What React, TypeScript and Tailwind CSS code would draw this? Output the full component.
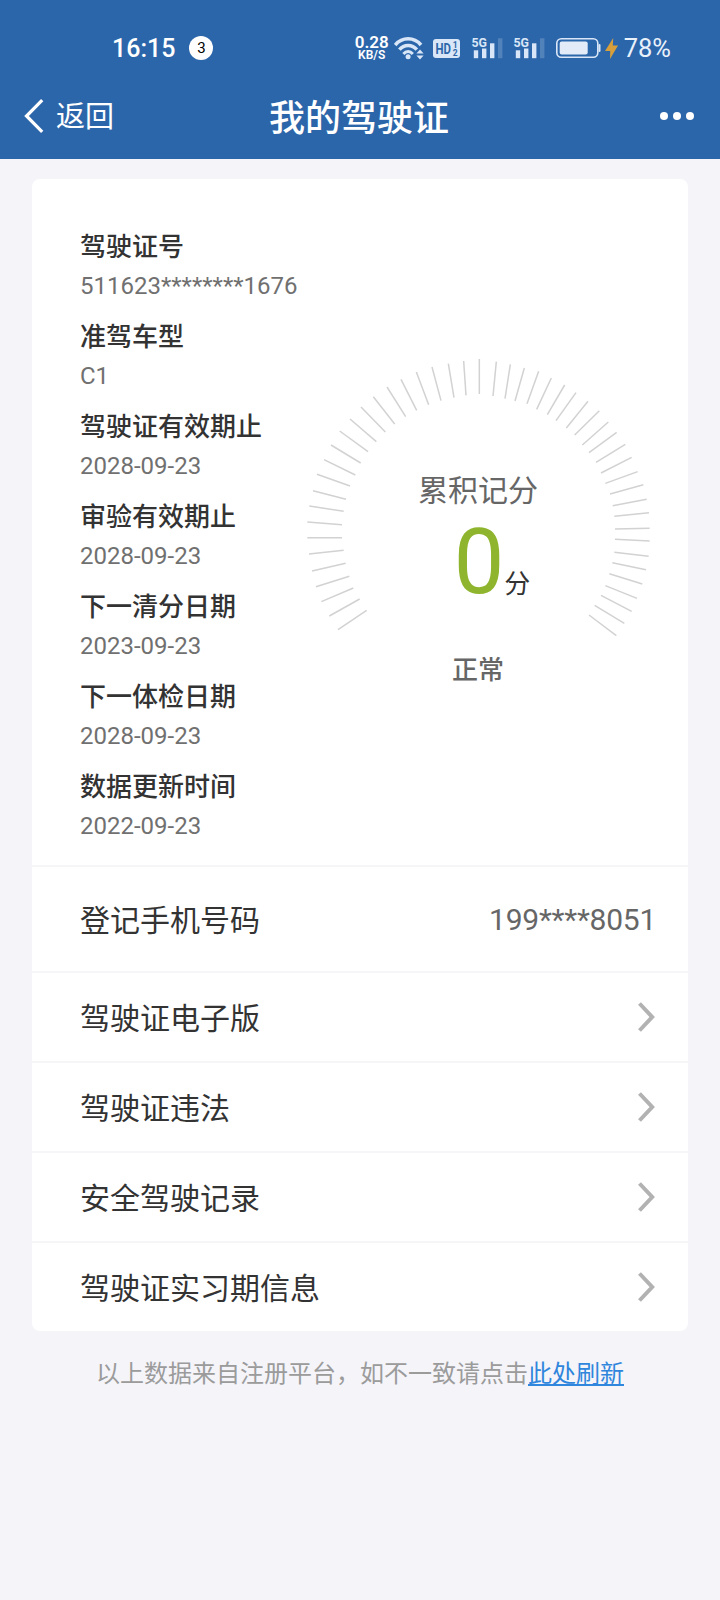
import type { ReactNode } from 'react';

interface Field {
    label: string;
    value: string;
}

const fields: Field[] = [
    { label: '驾驶证号', value: '511623********1676' },
    { label: '准驾车型', value: 'C1' },
    { label: '驾驶证有效期止', value: '2028-09-23' },
    { label: '审验有效期止', value: '2028-09-23' },
    { label: '下一清分日期', value: '2023-09-23' },
    { label: '下一体检日期', value: '2028-09-23' },
    { label: '数据更新时间', value: '2022-09-23' },
];

const links = ['驾驶证电子版', '驾驶证违法', '安全驾驶记录', '驾驶证实习期信息'];

// outer x, outer y, inner x, inner y (in thirds of a pixel), clockwise from the lower left
const ticks = [
    [144, 869, 230, 811], [118, 828, 209, 777], [94, 785, 190, 744], [78, 740, 178, 709], [66, 693, 167, 670],
    [57, 642, 161, 631], [52, 593, 156, 593], [52, 546, 156, 554], [58, 498, 161, 514], [69, 452, 168, 478],
    [81, 403, 180, 438], [102, 359, 196, 405], [123, 315, 212, 369], [149, 273, 234, 335], [180, 237, 259, 305],
    [213, 201, 286, 276], [250, 170, 314, 252], [291, 141, 347, 230], [333, 118, 380, 211], [379, 96, 416, 194],
    [426, 81, 453, 182], [475, 71, 492, 173], [521, 63, 528, 166], [568, 57, 568, 162], [619, 65, 609, 168],
    [661, 73, 645, 176], [703, 84, 675, 183], [746, 94, 711, 191], [784, 114, 740, 208], [824, 135, 772, 224],
    [858, 158, 798, 242], [894, 184, 829, 264], [928, 212, 854, 285], [955, 246, 877, 315], [980, 277, 897, 338],
    [1006, 313, 918, 367], [1025, 352, 933, 399], [1043, 395, 946, 430], [1060, 434, 960, 462], [1070, 478, 968, 497],
    [1077, 518, 973, 529], [1079, 565, 975, 567], [1079, 603, 975, 598], [1076, 649, 973, 637], [1068, 689, 967, 668],
    [1057, 732, 958, 701], [1041, 775, 946, 737], [1025, 814, 933, 766], [1003, 850, 914, 796], [979, 887, 897, 825],
];

function Signal() {
    return (
        <svg className="overflow-visible" width="32" height="22" viewBox="0 0 32 22" fill="#d9e6f7">
            <text x="-0.5" y="9.6" fontSize="13" fontWeight="700" textLength="15.5" lengthAdjust="spacingAndGlyphs">
                5G
            </text>
            <rect x="1.8" y="13.3" width="4.4" height="7.9" />
            <rect x="10" y="11.5" width="4.4" height="9.7" />
            <rect x="18" y="6.3" width="4.4" height="14.9" />
            <rect x="26" y="1.3" width="4.4" height="19.9" opacity="0.22" />
        </svg>
    );
}

function StatusBar() {
    return (
        <div className="flex h-[72px] items-center pt-6 pr-[49px] pl-[112px] text-[#e9f1fb]">
            <span className="text-[25px] leading-none font-medium text-white">16:15</span>
            <span className="ml-[14px] flex size-6 items-center justify-center rounded-full bg-white text-[15px] leading-none text-black">3</span>
            <div className="ml-auto flex items-center">
                <div className="flex w-[34px] flex-col items-center font-semibold text-white">
                    <span className="text-[17px] leading-[14px]">0.28</span>
                    <span className="text-[12px] leading-[13px]">KB/S</span>
                </div>
                <svg className="ml-[5px]" width="30" height="24" viewBox="0 0 30 24" fill="none" stroke="#d9e6f7" strokeWidth="3.5">
                    <path d="M1.2 9C8.2 0.8 20 0.8 27 9" />
                    <path d="M5.4 13.6C10 8 18.2 8 22.8 13.6" />
                    <path d="M9.4 18C12.2 14.8 16 14.8 18.8 18" strokeWidth="3" />
                    <circle cx="14.1" cy="20.8" r="2.5" fill="#d9e6f7" stroke="none" />
                    <path d="M22.4 17.4h7.2L26 13.4zM22.4 19.4h7.2L26 23.4z" fill="#d9e6f7" stroke="none" />
                </svg>
                <svg className="ml-[9px]" width="27" height="19" viewBox="0 0 27 19">
                    <rect width="27" height="19" rx="3" fill="#d9e6f7" />
                    <g fill="#2c66aa" fontWeight="700">
                        <text x="2.5" y="14.6" fontSize="14.5" textLength="15.5" lengthAdjust="spacingAndGlyphs">
                            HD
                        </text>
                        <text x="19.8" y="8.8" fontSize="8.5">1</text>
                        <text x="19.8" y="16.6" fontSize="8.5">2</text>
                    </g>
                </svg>
                <div className="ml-[12px] flex gap-[10px]">
                    <Signal />
                    <Signal />
                </div>
                <svg className="ml-[10px]" width="45" height="20" viewBox="0 0 45 20">
                    <rect x="0.8" y="0.8" width="41" height="18.4" rx="4.5" fill="none" stroke="#d9e6f7" strokeWidth="1.6" />
                    <rect x="3.7" y="3.6" width="28" height="12.8" rx="2" fill="#e3ebf8" />
                    <path d="M43.5 7v6" stroke="#d9e6f7" strokeWidth="2" strokeLinecap="round" />
                </svg>
                <svg className="ml-[4px]" width="13" height="21" viewBox="0 0 13 21" fill="#d79f3c">
                    <path d="M8.2 0L0 13h5.2L5 21 13 7.5H7.8z" />
                </svg>
                <span className="ml-[6px] pt-[2px] text-[25.5px] leading-none">78%</span>
            </div>
        </div>
    );
}

function NavBar() {
    return (
        <div className="grid h-[87px] grid-cols-3 items-center pr-[26px] pl-6 text-white">
            <div className="flex items-center text-[29px] leading-none">
                <svg width="20" height="34" viewBox="0 0 20 34" fill="none" stroke="currentColor" strokeWidth="3.2">
                    <path d="M18.2 1.2L2.5 17l15.7 15.8" />
                </svg>
                <span className="ml-[12px] pt-[4px]">返回</span>
            </div>
            <h1 className="pt-[6px] text-center text-[36px] leading-none font-medium whitespace-nowrap">我的驾驶证</h1>
            <div className="flex justify-end gap-[5px]">
                <span className="size-2 rounded-full bg-white" />
                <span className="size-2 rounded-full bg-white" />
                <span className="size-2 rounded-full bg-white" />
            </div>
        </div>
    );
}

function Gauge() {
    return (
        <div className="mt-[180px] mr-[38px] grid h-[360px] w-[343px] shrink-0">
            <svg className="col-start-1 row-start-1" width="343" height="277.33" viewBox="51 57 1029 832" stroke="#d2d2d2" strokeWidth="4.5">
                {ticks.map(([x1, y1, x2, y2], i) => (
                    <line key={i} x1={x1} y1={y1} x2={x2} y2={y2} />
                ))}
            </svg>
            <div className="col-start-1 row-start-1 flex flex-col items-center pt-[112px] pr-px text-[#666]">
                <p className="text-[30px] leading-[40px]">累积记分</p>
                <div className="mt-[7px] flex items-baseline pl-[28px] text-[26px] leading-[90px] text-[#333]">
                    <span className="text-[90px] text-[#8fb52e]">0</span>
                    <span>分</span>
                </div>
                <p className="mt-[21px] text-[26px] leading-[40px] font-medium">正常</p>
            </div>
        </div>
    );
}

function Row({ title, className, children }: { title: string; className: string; children: ReactNode }) {
    return (
        <div className={`flex items-center justify-between border-t-2 border-[#f6f6f8] pr-8 pl-12 text-[30px] text-[#333] ${className}`}>
            <span className="pt-[2px]">{title}</span>
            {children}
        </div>
    );
}

export default function App() {
    return (
        <div className="min-h-[1600px] w-[720px] bg-[#f4f4f9] font-['Roboto','Noto_Sans_CJK_SC',sans-serif]">
            <header className="bg-[#2c66aa]">
                <StatusBar />
                <NavBar />
            </header>

            <main className="mx-8 mt-5 rounded-lg bg-white">
                <section className="flex h-[686px] justify-between">
                    <dl className="flex w-[220px] flex-col gap-[12px] pt-[48px] pl-12 whitespace-nowrap">
                        {fields.map((field) => (
                            <div key={field.label}>
                                <dt className="text-[26px] leading-[40px] font-medium text-[#333]">{field.label}</dt>
                                <dd className="text-[24px] leading-[38px] text-[#707070]">{field.value}</dd>
                            </div>
                        ))}
                    </dl>
                    <Gauge />
                </section>

                <Row title="登记手机号码" className="h-[106px]">
                    <span className="pt-px tracking-[-0.25px] text-[#666]">199****8051</span>
                </Row>
                {links.map((link) => (
                    <Row key={link} title={link} className="h-[90px]">
                        <svg className="mr-px" width="17" height="30" viewBox="0 0 17 30" fill="none" stroke="#b2b2b2" strokeWidth="4">
                            <path d="M1.5 1.5L14.2 15 1.5 28.5" />
                        </svg>
                    </Row>
                ))}
            </main>

            <p className="mt-[25px] text-center text-[24px] leading-[36px] text-[#9b9b9b]">
                以上数据来自注册平台，如不一致请点击
                <a className="text-[#2f86dc] underline">此处刷新</a>
            </p>
        </div>
    );
}
